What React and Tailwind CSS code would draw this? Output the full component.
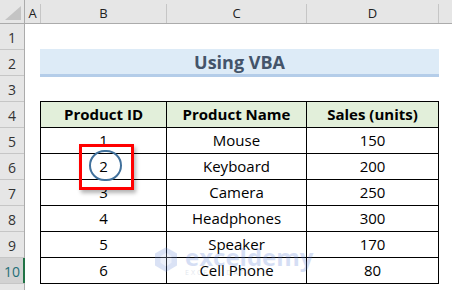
import React from "react";

const rows = [
  ["1", "Mouse", "150"],
  ["2", "Keyboard", "200"],
  ["3", "Camera", "250"],
  ["4", "Headphones", "300"],
  ["5", "Speaker", "170"],
  ["6", "Cell Phone", "80"],
];

export default function App() {
  const font = { fontFamily: "'Open Sans', 'Noto Sans', sans-serif" };
  return (
    <div className="relative w-[452px] h-[290px] bg-white overflow-hidden" style={font}>
      {/* Column header */}
      <div className="flex h-[24px] bg-[#e6e6e6] border-b border-[#ababab] text-[13px] text-[#222]">
        <div className="w-[25px] h-full border-r border-[#ababab] flex items-end justify-end pr-[3px] pb-[3px]">
          <svg width="16" height="14" viewBox="0 0 16 14">
            <polygon points="16,0 16,14 0,14" fill="#c4c4c4" />
          </svg>
        </div>
        <div className="w-[16px] h-[19px] mt-[4px] border-r border-[#c6c6c6] flex items-center justify-center leading-none">A</div>
        <div className="w-[126px] h-[19px] mt-[4px] border-r border-[#c6c6c6] flex items-center justify-center leading-none">B</div>
        <div className="w-[140px] h-[19px] mt-[4px] border-r border-[#c6c6c6] flex items-center justify-center leading-none">C</div>
        <div className="w-[132px] h-[19px] mt-[4px] border-r border-[#c6c6c6] flex items-center justify-center leading-none">D</div>
        <div className="flex-1" />
      </div>

      <div className="flex">
        {/* Row headers */}
        <div className="w-[25px] flex flex-col text-[14px] text-[#333] bg-[#e6e6e6] border-r border-[#ababab]">
          {[1, 2, 3, 4, 5, 6, 7, 8, 9].map((n) => (
            <div key={n} className="h-[26px] border-b border-[#c6c6c6] flex items-center justify-center pt-[2px]">
              {n}
            </div>
          ))}
          <div className="h-[26px] border-b border-[#c6c6c6] bg-[#d2d2d2] flex items-center justify-center pt-[2px] text-[#1f6f78] relative">
            10
            <div className="absolute right-[-1px] top-0 h-full w-[2px] bg-[#217346]" />
          </div>
          <div className="h-[10px]" />
        </div>

        {/* Sheet area */}
        <div className="flex flex-col pl-[15px]">
          <div className="h-[25px]" />
          <div className="w-[399px] h-[28px] bg-[#ddebf7] border-b-[3px] border-[#b4cde9] flex items-center justify-center text-[18px] font-bold text-[#44546a] leading-none">
            Using VBA
          </div>
          <div className="h-[24px]" />
          <div className="border-t border-l border-black w-[399px] text-[15px] text-black">
            <div className="flex bg-[#e2efda] font-bold">
              <div className="w-[126px] h-[26px] border-r border-b border-black flex items-center justify-center">Product ID</div>
              <div className="w-[140px] h-[26px] border-r border-b border-black flex items-center justify-center">Product Name</div>
              <div className="w-[132px] h-[26px] border-r border-b border-black flex items-center justify-center">Sales (units)</div>
            </div>
            {rows.map((r) => (
              <div key={r[0]} className="flex">
                <div className="w-[126px] h-[26px] border-r border-b border-black flex items-center justify-center">{r[0]}</div>
                <div className="w-[140px] h-[26px] border-r border-b border-black flex items-center justify-center">{r[1]}</div>
                <div className="w-[132px] h-[26px] border-r border-b border-black flex items-center justify-center">{r[2]}</div>
              </div>
            ))}
          </div>
        </div>
      </div>

      {/* Watermark */}
      <div className="absolute left-[155px] top-[246px] flex items-start gap-[8px] pointer-events-none opacity-25">
        <svg width="22" height="25" viewBox="0 0 24 27" className="mt-[1px]">
          <polygon points="12,0 24,7 24,20 12,27 0,20 0,7" fill="#6f8fd8" />
          <polygon points="12,6 18,10 18,17 12,21 6,17 6,10" fill="#ffffff" opacity="0.5" />
        </svg>
        <div className="flex flex-col leading-none">
          <span className="text-[24px] font-bold text-[#5b7fd6] leading-[22px]">exceldemy</span>
          <span className="text-[7px] text-[#8a9ab8] tracking-[2px] mt-[1px]">EXCEL · DATA · BI</span>
        </div>
      </div>

      {/* Red highlight box */}
      <div className="absolute left-[79px] top-[144px] w-[55px] h-[46px] border-[3px] border-[#ff0000] shadow-[2px_3px_4px_rgba(0,0,0,0.3)]" />
      {/* Circle */}
      <div className="absolute left-[89px] top-[150px] w-[33px] h-[31px] rounded-full border-2 border-[#41719c]" />
    </div>
  );
}
